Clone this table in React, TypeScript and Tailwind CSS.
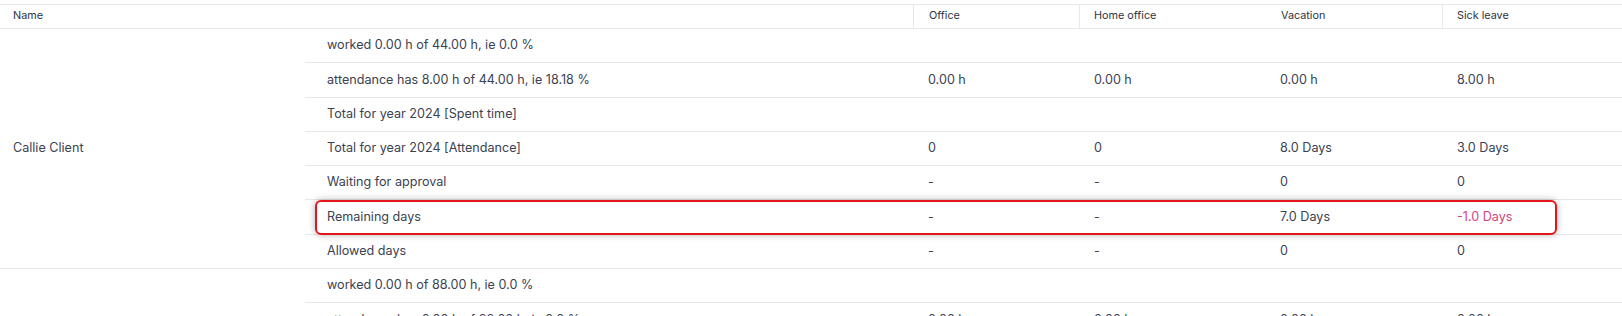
type Row = {
    label: string;
    values: string[];
    highlight?: boolean;
};

type Person = {
    name: string;
    rows: Row[];
};

const people: Person[] = [
    {
        name: "Callie Client",
        rows: [
            {label: "worked 0.00 h of 44.00 h, ie 0.0 %", values: ["", "", "", ""]},
            {label: "attendance has 8.00 h of 44.00 h, ie 18.18 %", values: ["0.00 h", "0.00 h", "0.00 h", "8.00 h"]},
            {label: "Total for year 2024 [Spent time]", values: ["", "", "", ""]},
            {label: "Total for year 2024 [Attendance]", values: ["0", "0", "8.0 Days", "3.0 Days"]},
            {label: "Waiting for approval", values: ["-", "-", "0", "0"]},
            {label: "Remaining days", values: ["-", "-", "7.0 Days", "-1.0 Days"], highlight: true},
            {label: "Allowed days", values: ["-", "-", "0", "0"]},
        ],
    },
    {
        name: "",
        rows: [
            {label: "worked 0.00 h of 88.00 h, ie 0.0 %", values: ["", "", "", ""]},
            {label: "attendance has 0.00 h of 88.00 h, ie 0.0 %", values: ["0.00 h", "0.00 h", "0.00 h", "0.00 h"]},
        ],
    },
];

function ValueCell({value}: { value: string }) {
    const negative = value.startsWith("-") && value.length > 1;
    return (
        <div className={negative ? "pl-[15px] text-[#d8437f]" : "pl-[15px]"}>
            {value}
        </div>
    );
}

function DataRow({row}: { row: Row }) {
    return (
        <div className="relative grid h-[34.3px] grid-cols-[608px_166px_186px_177px_1fr] items-center border-b border-[#e6e8eb]">
            <div className="pl-[22px]">{row.label}</div>
            <ValueCell value={row.values[0]}/>
            <ValueCell value={row.values[1]}/>
            <ValueCell value={row.values[2]}/>
            <ValueCell value={row.values[3]}/>
            {row.highlight && (
                <div
                    className="pointer-events-none absolute left-[10px] right-[65px] top-[0px] bottom-[-1px] rounded-[6px] border-2 border-[#e3151c] shadow-[0_0_7px_rgba(0,0,0,0.3)]"/>
            )}
        </div>
    );
}

export default function App() {
    return (
        <div className="bg-white pt-1 font-['Inter',sans-serif] text-[12.6px] text-[#3b4252]">
            <div
                className="grid h-[25px] grid-cols-[913px_166px_186px_177px_1fr] items-stretch border-y border-[#e6e8eb] text-[10.8px] text-[#2c3343]">
                <div className="flex items-center pl-[13px]">Name</div>
                <div className="flex items-center border-l border-[#e6e8eb] pl-[15px]">Office</div>
                <div className="flex items-center border-l border-[#e6e8eb] pl-[14px]">Home office</div>
                <div className="flex items-center pl-[16px]">Vacation</div>
                <div className="flex items-center border-l border-[#e6e8eb] pl-[14px]">Sick leave</div>
            </div>
            {people.map((person, i) => (
                <div key={i} className="flex">
                    <div className="flex w-[305px] shrink-0 items-center border-b border-[#e6e8eb] pl-[13px]">
                        {person.name}
                    </div>
                    <div className="flex-1">
                        {person.rows.map((row, j) => (
                            <DataRow key={j} row={row}/>
                        ))}
                    </div>
                </div>
            ))}
        </div>
    );
}
